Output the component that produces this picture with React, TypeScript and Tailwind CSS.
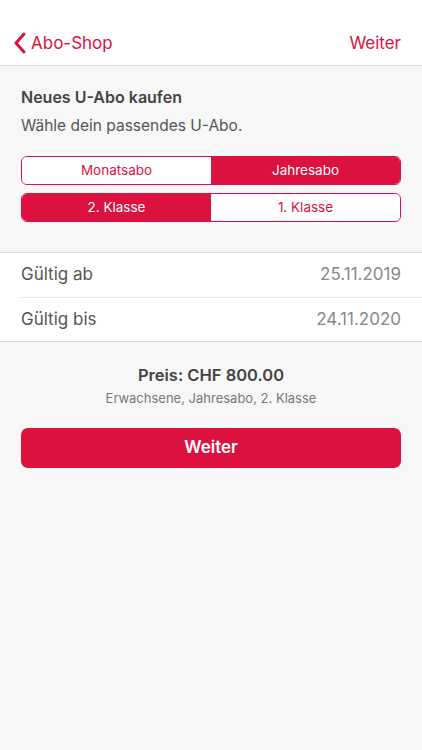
import { useState } from "react"

const RED = "bg-[#dc1140]"

function Segmented({ options, value, onChange }: { options: string[]; value: number; onChange: (i: number) => void }) {
  return (
    <div className="flex h-[29px] overflow-hidden rounded-[6px] border border-[#dc1140] bg-white">
      {options.map((o, i) => (
        <button
          key={o}
          onClick={() => onChange(i)}
          className={
            "flex-1 text-[13.5px] " + (value === i ? RED + " text-white" : "bg-white text-[#dc1140]")
          }
        >
          {o}
        </button>
      ))}
    </div>
  )
}

export default function App() {
  const [abo, setAbo] = useState(1)
  const [klasse, setKlasse] = useState(0)

  return (
    <div className="min-h-[750px] bg-[#f7f7f7] font-['Inter',sans-serif] text-[#444]">
      <header className="flex h-[66px] items-end border-b border-[#dcdcdc] bg-white px-[13px] pb-[9px]">
        <button className="flex items-center gap-[5px] text-[17px] text-[#dc1140]">
          <svg width="13" height="22" viewBox="0 0 13 22" fill="none">
            <path d="M11 2L3 11l8 9" stroke="#dc1140" strokeWidth="3" strokeLinecap="round" strokeLinejoin="round" />
          </svg>
          Abo-Shop
        </button>
        <button className="ml-auto pr-[8px] text-[17px] text-[#dc1140]">Weiter</button>
      </header>

      <section className="px-[21px] pt-[19px] pb-[30px]">
        <h1 className="text-[16px] leading-[24px] font-semibold text-[#444]">Neues U-Abo kaufen</h1>
        <p className="mt-[5px] text-[15.5px] leading-[24px] text-[#555]">Wähle dein passendes U-Abo.</p>
        <div className="mt-[18px] flex flex-col gap-[8px]">
          <Segmented options={["Monatsabo", "Jahresabo"]} value={abo} onChange={setAbo} />
          <Segmented options={["2. Klasse", "1. Klasse"]} value={klasse} onChange={setKlasse} />
        </div>
      </section>

      <div className="border-y border-[#dcdcdc] bg-white">
        <div className="ml-[21px] flex h-[45px] items-center border-b border-[#e6e6e6] pr-[21px] text-[17px]">
          <span className="text-[#555]">Gültig ab</span>
          <span className="ml-auto text-[#888]">25.11.2019</span>
        </div>
        <div className="ml-[21px] flex h-[43px] items-center pr-[21px] text-[17px]">
          <span className="text-[#555]">Gültig bis</span>
          <span className="ml-auto text-[#888]">24.11.2020</span>
        </div>
      </div>

      <section className="px-[21px] pt-[21px]">
        <div className="text-center text-[16.5px] leading-[25px] font-semibold text-[#444]">Preis: CHF 800.00</div>
        <div className="text-center text-[13px] leading-[20px] text-[#777]">Erwachsene, Jahresabo, 2. Klasse</div>
        <button className={"mt-[20px] h-[40px] w-full rounded-[7px] text-[17px] font-semibold text-white " + RED}>
          Weiter
        </button>
      </section>
    </div>
  )
}
